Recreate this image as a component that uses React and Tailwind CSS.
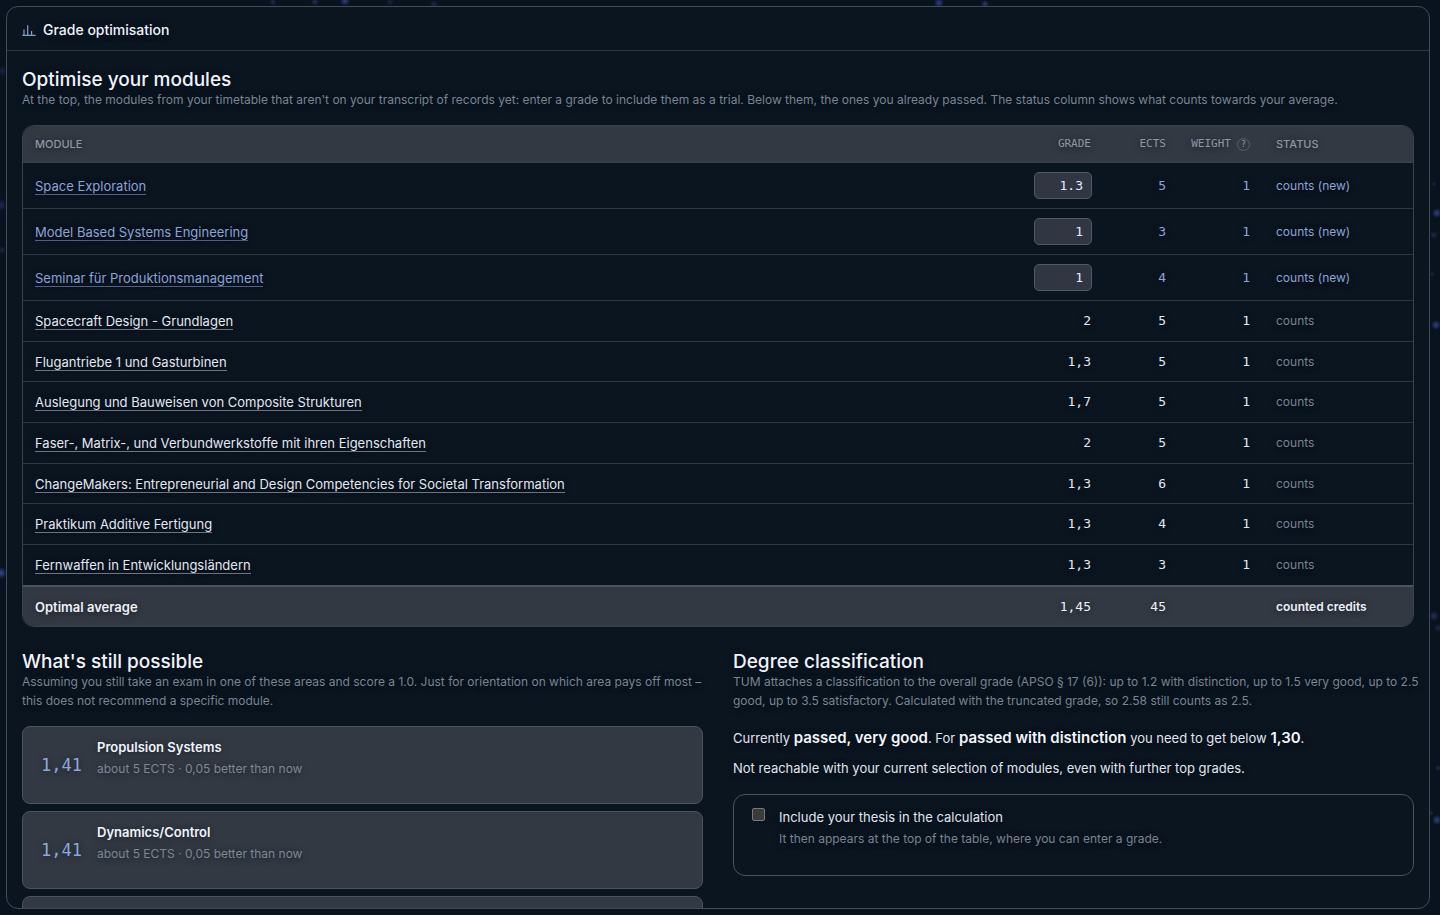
const newModules = [
  { name: 'Space Exploration', grade: '1.3', ects: 5 },
  { name: 'Model Based Systems Engineering', grade: '1', ects: 3 },
  { name: 'Seminar für Produktionsmanagement', grade: '1', ects: 4 },
];

const passedModules = [
  { name: 'Spacecraft Design - Grundlagen', grade: '2', ects: 5 },
  { name: 'Flugantriebe 1 und Gasturbinen', grade: '1,3', ects: 5 },
  { name: 'Auslegung und Bauweisen von Composite Strukturen', grade: '1,7', ects: 5 },
  { name: 'Faser-, Matrix-, und Verbundwerkstoffe mit ihren Eigenschaften', grade: '2', ects: 5 },
  { name: 'ChangeMakers: Entrepreneurial and Design Competencies for Societal Transformation', grade: '1,3', ects: 6 },
  { name: 'Praktikum Additive Fertigung', grade: '1,3', ects: 4 },
  { name: 'Fernwaffen in Entwicklungsländern', grade: '1,3', ects: 3 },
];

const areas = ['Propulsion Systems', 'Dynamics/Control'];

const mono = "font-['DejaVu_Sans_Mono',monospace]";

function ChartIcon() {
  return (
    <svg width="14" height="14" viewBox="0 0 14 14" fill="none" stroke="#869dd4" aria-hidden="true">
      <path d="M0.4 12.4H13.6" strokeWidth="1.3" />
      <path d="M2 12.4V6.4M5.7 12.4V2.2M9.6 12.4V8" strokeWidth="1.2" />
    </svg>
  );
}

function Stars() {
  const stars = [
    [273, 2, 3, 0.4], [315, 2, 3, 0.5], [345, 1, 4, 0.8], [390, 2, 3, 0.3], [434, 4, 3, 0.4], [939, 3, 4, 0.8], [985, 4, 3, 0.7],
    [1434, 184, 2, 0.3], [1437, 213, 4, 0.8], [1434, 235, 3, 0.4], [1432, 274, 2, 0.3], [1436, 325, 4, 0.8],
    [1434, 616, 4, 0.5], [1438, 628, 3, 0.4], [1438, 768, 2, 0.4], [1431, 813, 2, 0.4], [1437, 820, 4, 0.8],
    [1, 573, 5, 0.9], [2, 71, 4, 0.3], [1, 205, 5, 0.4], [2, 250, 3, 0.3],
  ];
  return (
    <svg className="absolute inset-0 h-full w-full" aria-hidden="true">
      <defs>
        <radialGradient id="star">
          <stop offset="0" stopColor="#3a4c9c" />
          <stop offset="1" stopColor="#3a4c9c" stopOpacity="0" />
        </radialGradient>
      </defs>
      {stars.map(([x, y, r, o]) => (
        <circle key={`${x}-${y}`} cx={x} cy={y} r={r + 1} fill="url(#star)" opacity={o} />
      ))}
    </svg>
  );
}

function SectionHead({ title, children }) {
  return (
    <header className="-mr-2">
      <h2 className="text-[19px] leading-[21px] font-medium text-[#f1f3fa]">{title}</h2>
      <p className="text-[12px] leading-[19px] text-[#7b8492]">{children}</p>
    </header>
  );
}

function ModulesTable() {
  return (
    <div className="mt-4 overflow-hidden rounded-xl border border-[#38424d]">
      <table className="w-full table-fixed border-separate border-spacing-0 text-right text-[13px] leading-5">
        <colgroup>
          <col />
          <col className="w-[83px]" />
          <col className="w-[75px]" />
          <col className="w-[84px]" />
          <col className="w-[149px]" />
        </colgroup>
        <thead className="bg-[#323943] text-[11px] leading-4 text-[#8f97a4] uppercase [&_th]:h-[37px] [&_th]:border-b [&_th]:border-[#38424d] [&_th]:font-medium">
          <tr>
            <th scope="col" className="px-3 text-left">Module</th>
            <th scope="col" className={`${mono} pr-[14px]`}>Grade</th>
            <th scope="col" className={`${mono} pr-[14px]`}>ECTS</th>
            <th scope="col" className={`${mono} pr-[14px]`}>
              <span className="flex items-center justify-end gap-1.5">
                Weight
                <button type="button" aria-label="About the weight" className="flex size-[13px] items-center justify-center rounded-full border border-[#59606c] text-[9px] leading-none">?</button>
              </span>
            </th>
            <th scope="col" className="px-3 text-left">Status</th>
          </tr>
        </thead>
        <tbody className="[&_td]:border-b [&_td]:border-[#2d3843]">
          {newModules.map((m) => (
            <tr key={m.name} className="h-[46px] text-[#8ea3d6]">
              <td className="px-3 text-left">
                <a href="#" className="border-b border-[#56648c]">{m.name}</a>
              </td>
              <td className="pr-[13px]">
                <input
                  type="text"
                  aria-label={`Grade for ${m.name}`}
                  defaultValue={m.grade}
                  className={`${mono} ml-auto block h-[27px] w-[58px] rounded-[5px] border border-[#515863] bg-[#313742] px-2 text-right text-[13px] text-[#e8ebf3] outline-none`}
                />
              </td>
              <td className={`${mono} pr-[14px]`}>{m.ects}</td>
              <td className={`${mono} pr-[14px]`}>1</td>
              <td className="px-3 text-left text-[12px]">counts (new)</td>
            </tr>
          ))}
          {passedModules.map((m) => (
            <tr key={m.name} className="h-[41px] text-[#e4e7f0] nth-[3n+2]:h-10 last:h-10 last:[&_td]:border-b-0">
              <td className="px-3 text-left">
                <a href="#" className="border-b border-[#737a86]">{m.name}</a>
              </td>
              <td className={`${mono} pr-[14px]`}>{m.grade}</td>
              <td className={`${mono} pr-[14px]`}>{m.ects}</td>
              <td className={`${mono} pr-[14px]`}>1</td>
              <td className="px-3 text-left text-[12px] text-[#7b8391]">counts</td>
            </tr>
          ))}
        </tbody>
        <tfoot className="bg-[#323943] text-[#eef0f7] [&>tr>*]:h-[41px] [&>tr>*]:border-t-2 [&>tr>*]:border-[#4b5460]">
          <tr>
            <th scope="row" className="px-3 text-left font-semibold">Optimal average</th>
            <td className={`${mono} pr-[14px]`}>1,45</td>
            <td className={`${mono} pr-[14px]`}>45</td>
            <td />
            <td className="px-3 text-left text-[12px] font-semibold">counted credits</td>
          </tr>
        </tfoot>
      </table>
    </div>
  );
}

const card = 'flex h-[78px] items-center rounded-lg border border-[#4a535e] bg-[#323943] pl-[18px]';

export default function App() {
  return (
    <div className="relative h-screen overflow-hidden bg-[#09131f] pt-1.5 pr-2.5 pb-1.5 pl-1.5 font-['Inter',sans-serif] [text-shadow:0_1px_6px_rgba(5,10,20,0.5)]">
      <Stars />
      <main className="relative flex h-full flex-col overflow-hidden rounded-xl border border-[#434c57] bg-[#0a1520]">
        <div className="flex h-11 shrink-0 items-center gap-[7px] border-b border-[#2c3742] px-[15px] pt-0.5">
          <ChartIcon />
          <h1 className="text-[14px] leading-5 font-medium text-[#f1f3fa]">Grade optimisation</h1>
        </div>
        <div className="min-h-0 flex-1 overflow-hidden px-[15px] pt-[18px]">
          <SectionHead title="Optimise your modules">
            At the top, the modules from your timetable that aren't on your transcript of records yet: enter a grade to include them as a trial. Below them, the ones you already passed. The status column shows what counts towards your average.
          </SectionHead>
          <ModulesTable />
          <div className="mt-6 grid grid-cols-2 gap-[30px]">
            <section>
              <SectionHead title="What's still possible">
                Assuming you still take an exam in one of these areas and score a 1.0. Just for orientation on which area pays off most – this does not recommend a specific module.
              </SectionHead>
              <ul className="mt-4 flex flex-col gap-[7px]">
                {areas.map((a) => (
                  <li key={a} className={card}>
                    <span className={`${mono} w-14 text-[17px] leading-6 text-[#8ba8dc]`}>1,41</span>
                    <div className="self-start pt-[9px]">
                      <h3 className="text-[13px] leading-[22px] font-semibold text-[#f1f3fa]">{a}</h3>
                      <p className="text-[12px] leading-[22px] text-[#7f8794]">about 5 ECTS · 0,05 better than now</p>
                    </div>
                  </li>
                ))}
                <li className={card} aria-hidden="true" />
              </ul>
            </section>
            <section>
              <SectionHead title="Degree classification">
                TUM attaches a classification to the overall grade (APSO § 17 (6)): up to 1.2 with distinction, up to 1.5 very good, up to 2.5 good, up to 3.5 satisfactory. Calculated with the truncated grade, so 2.58 still counts as 2.5.
              </SectionHead>
              <p className="mt-4 text-[13px] leading-6 text-[#e1e5ee] [&_strong]:text-[15px] [&_strong]:font-semibold [&_strong]:text-[#f4f6fb]">
                Currently <strong>passed, very good</strong>. For <strong>passed with distinction</strong> you need to get below <strong>1,30</strong>.
              </p>
              <p className="mt-[7px] text-[13px] leading-[22px] text-[#e1e5ee]">
                Not reachable with your current selection of modules, even with further top grades.
              </p>
              <div className="mt-[15px] flex h-[82px] items-start gap-3.5 rounded-xl border border-[#4a535e] px-[18px] pt-[11px]">
                <input id="thesis" type="checkbox" className="mt-[2px] size-[13px] appearance-none rounded-[2px] border border-[#777a7e] bg-[#3b3b3b]" />
                <label htmlFor="thesis" className="text-[13px] leading-[22px] text-[#e1e5ee]">
                  Include your thesis in the calculation
                  <span className="block text-[12px] text-[#7b8391]">It then appears at the top of the table, where you can enter a grade.</span>
                </label>
              </div>
            </section>
          </div>
        </div>
      </main>
    </div>
  );
}
